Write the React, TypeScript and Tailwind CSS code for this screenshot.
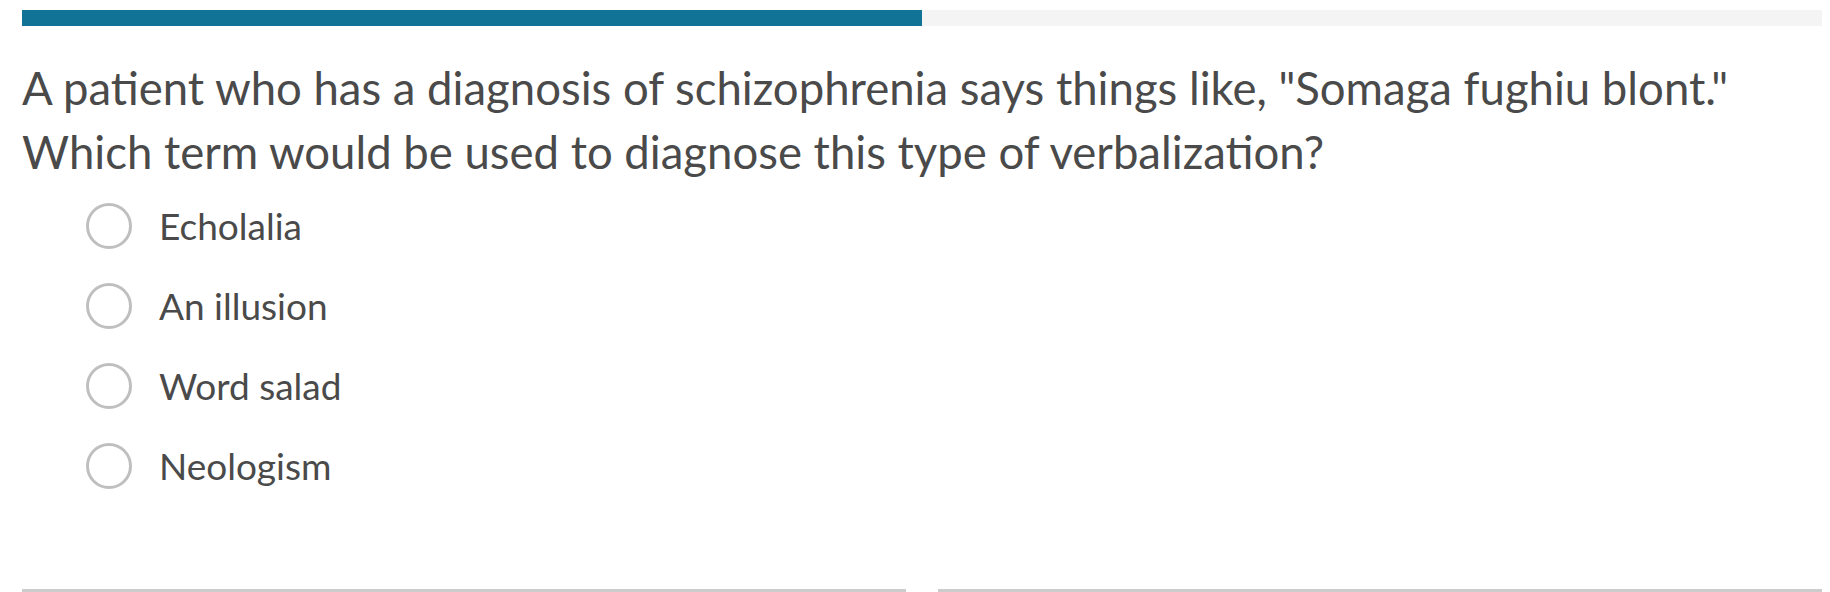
import React from "react";

const options = ["Echolalia", "An illusion", "Word salad", "Neologism"];

export default function App() {
  return (
    <div className="h-[592px] w-full overflow-hidden bg-white pl-[22px] pr-[8px] pt-[10px] text-[#4a4a4a]" style={{ fontFamily: "Lato, 'Open Sans', sans-serif" }}>
      {/* progress */}
      <div className="flex h-4 w-full bg-[#f4f4f4]">
        <div className="h-full w-1/2 bg-[#117396]" />
      </div>

      <p className="mt-[30px] text-[45.5px] leading-[64px]">
        A patient who has a diagnosis of schizophrenia says things like, "Somaga fughiu blont."
        <br />
        Which term would be used to diagnose this type of verbalization?
      </p>

      <div className="mt-[2px] flex flex-col">
        {options.map((o) => (
          <label key={o} className="flex h-[80px] items-center pl-[64px]">
            <span className="h-[46px] w-[46px] shrink-0 rounded-full border-[3px] border-[#bfbfbf]" />
            <span className="ml-[27px] text-[37px]">{o}</span>
          </label>
        ))}
      </div>

      <div className="mt-[83px] flex gap-8">
        <div className="h-10 flex-1 border-t-[3px] border-[#cccccc]" />
        <div className="h-10 flex-1 border-t-[3px] border-[#cccccc]" />
      </div>
    </div>
  );
}
